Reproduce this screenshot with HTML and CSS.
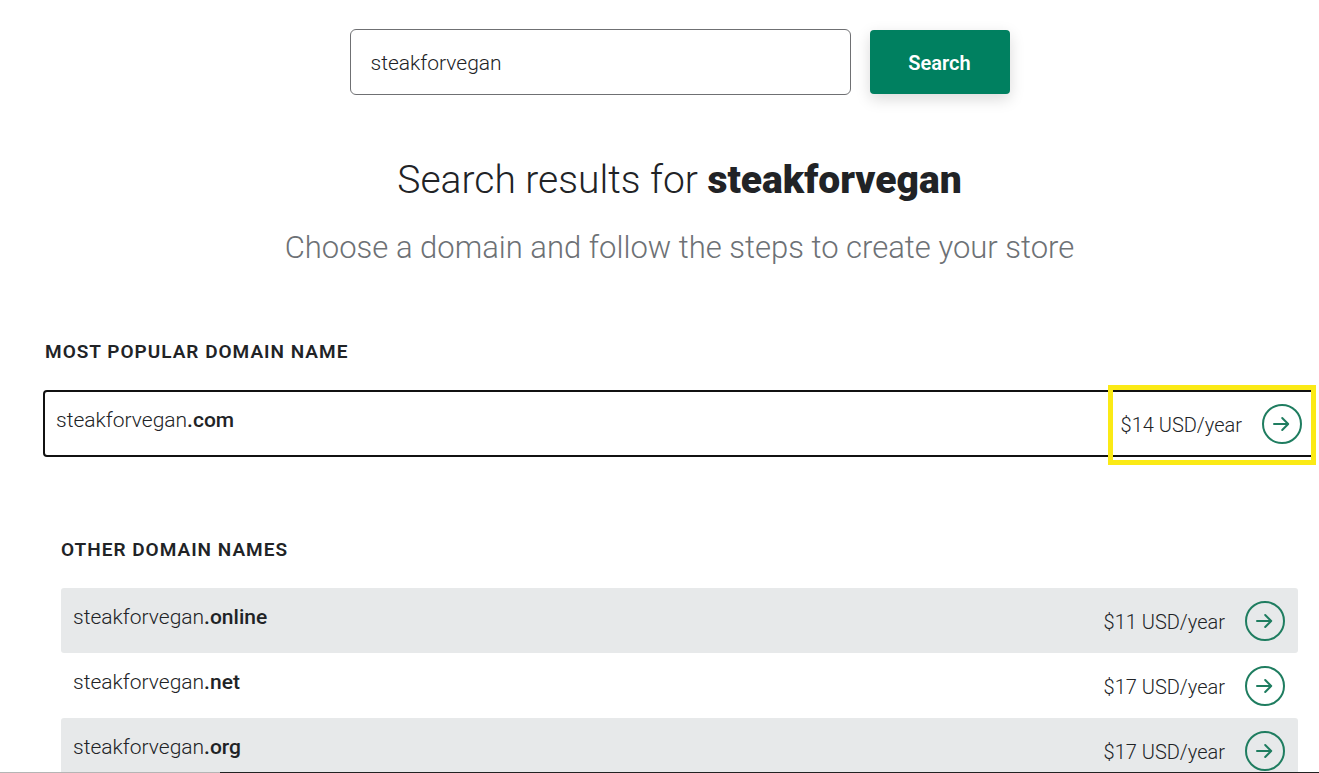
FILE: index.html
```html
<!DOCTYPE html>
<html lang="en">
  <head>
    <meta charset="utf-8" />
    <meta name="viewport" content="width=device-width,initial-scale=1.0" />
    <title>Search results for steakforvegan</title>
    <link rel="stylesheet" href="styles.css">
  </head>

  <body>
    <!-- arrow used by every domain row -->
    <svg class="sprite" aria-hidden="true">
      <symbol id="arrow" viewBox="0 0 20 20">
        <path d="M2 10H16M10.2 4L16.2 10L10.2 16" />
      </symbol>
    </svg>

    <main>
      <form class="search">
        <input class="search-input" type="text" name="query" value="steakforvegan" aria-label="Domain name" />
        <button class="search-button" type="submit">Search</button>
      </form>

      <header class="intro">
        <h1>Search results for <strong>steakforvegan</strong></h1>
        <p>Choose a domain and follow the steps to create your store</p>
      </header>

      <section class="popular">
        <h2>Most popular domain name</h2>
        <div class="domain featured">
          <span class="name">steakforvegan<b>.com</b></span>
          <span class="price">$14 USD/year</span>
          <a class="go" href="#" aria-label="Choose steakforvegan.com"><svg><use href="#arrow" /></svg></a>
          <div class="marker"></div>
        </div>
      </section>

      <section class="others">
        <h2>Other domain names</h2>
        <ul>
          <li class="domain">
            <span class="name">steakforvegan<b>.online</b></span>
            <span class="price">$11 USD/year</span>
            <a class="go" href="#" aria-label="Choose steakforvegan.online"><svg><use href="#arrow" /></svg></a>
          </li>
          <li class="domain">
            <span class="name">steakforvegan<b>.net</b></span>
            <span class="price">$17 USD/year</span>
            <a class="go" href="#" aria-label="Choose steakforvegan.net"><svg><use href="#arrow" /></svg></a>
          </li>
          <li class="domain">
            <span class="name">steakforvegan<b>.org</b></span>
            <span class="price">$17 USD/year</span>
            <a class="go" href="#" aria-label="Choose steakforvegan.org"><svg><use href="#arrow" /></svg></a>
          </li>
        </ul>
      </section>
    </main>

    <div class="bottom-edge"></div>
  </body>
</html>
```

FILE: styles.css
```css
* {
  box-sizing: border-box;
}
body {
  margin: 0;
  height: 100vh;
  overflow: hidden;
  background: #fff;
  color: #212326;
  font-family: Roboto, "Liberation Sans", sans-serif;
  font-size: 20px;
  line-height: 28px;
}
main {
  padding: 29px 21px 0 61px;
}
.sprite {
  position: absolute;
  width: 0;
  height: 0;
}

/* search form */
.search {
  display: flex;
  justify-content: center;
  align-items: center;
  gap: 19px;
}
.search-input {
  width: 501px;
  height: 66px;
  padding: 2px 20px 0;
  border: 1px solid #6f7073;
  border-radius: 6px;
  background: #fff;
  color: inherit;
  font: inherit;
  font-size: 21px;
  font-weight: 300;
}
.search-button {
  width: 140px;
  height: 64px;
  padding: 2px 0 0;
  border: none;
  border-radius: 4px;
  background: #008060;
  box-shadow: 0 5px 15px rgba(0, 0, 0, 0.15);
  color: #fff;
  font: inherit;
  font-weight: 600;
  cursor: pointer;
}

/* headings */
.intro {
  padding-top: 61px;
  text-align: center;
}
h1 {
  margin: 0;
  font-size: 39px;
  font-weight: 300;
  line-height: 48px;
}
h1 strong {
  font-weight: 900;
}
.intro p {
  margin: 24px 0 0;
  color: #6d7175;
  font-size: 31px;
  font-weight: 300;
  line-height: 40px;
}
h2 {
  margin: 0 0 24px;
  font-size: 19px;
  font-weight: 600;
  letter-spacing: 1px;
  line-height: 28px;
  text-transform: uppercase;
}

/* domain rows */
.domain {
  display: flex;
  align-items: center;
  height: 65px;
  padding: 0 13px 0 12px;
}
.name {
  flex: 1;
  padding-bottom: 8px;
  font-size: 21px;
  font-weight: 300;
}
.name b {
  font-weight: 500;
}
.price {
  padding-top: 2px;
  font-weight: 300;
}
.go {
  display: flex;
  justify-content: center;
  align-items: center;
  width: 40px;
  height: 40px;
  margin-left: 20px;
  border: 2px solid #1f7d60;
  border-radius: 50%;
}
.go svg {
  width: 20px;
  height: 20px;
  fill: none;
  stroke: #1f7d60;
  stroke-width: 2;
  stroke-linecap: round;
  stroke-linejoin: round;
}

.popular {
  margin: 70px -17px 0 -18px;
}
.popular h2 {
  padding-left: 2px;
}
.featured {
  position: relative;
  height: 67px;
  padding: 0 11px;
  border: 2px solid #111;
  border-radius: 4px;
}
/* frame over the price of the featured domain */
.marker {
  position: absolute;
  top: -7px;
  right: -3px;
  width: 208px;
  height: 80px;
  border: 5px solid #fbea15;
  pointer-events: none;
}

.others {
  padding-top: 79px;
}
.others ul {
  margin: 0;
  padding: 0;
  list-style: none;
}
.others .domain {
  border-radius: 3px;
}
.others .domain:nth-child(odd) {
  background: #e7e9ea;
}

.bottom-edge {
  position: fixed;
  left: 0;
  right: 0;
  bottom: 0;
  height: 1px;
  background: linear-gradient(to right, #b5b5b5 220px, #222 220px);
}
```
